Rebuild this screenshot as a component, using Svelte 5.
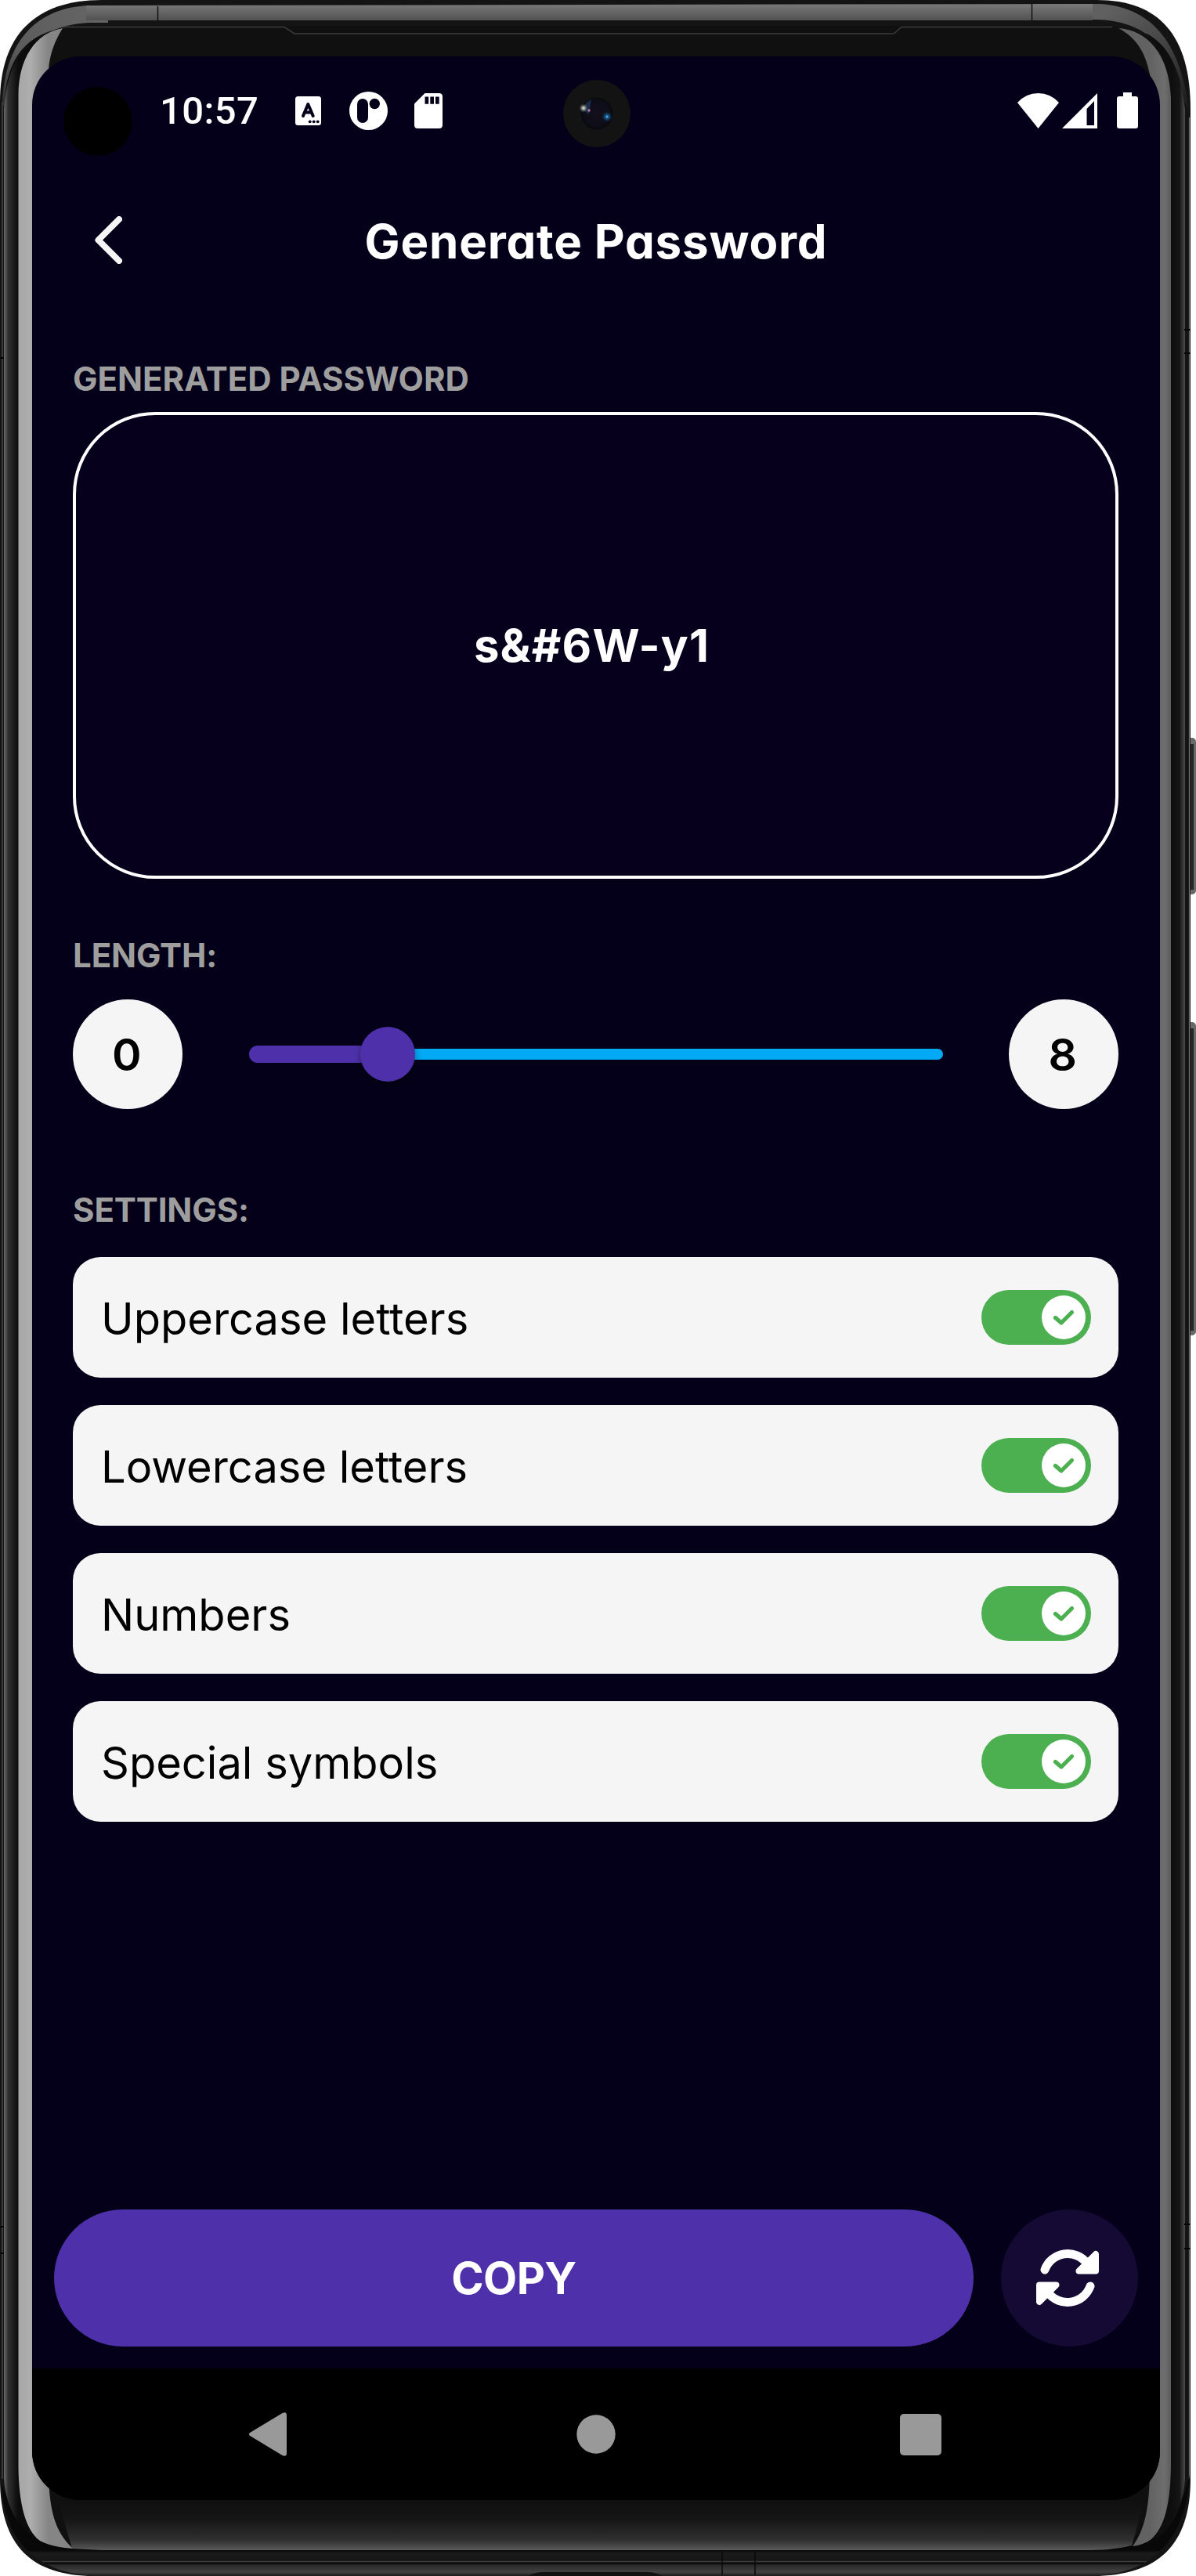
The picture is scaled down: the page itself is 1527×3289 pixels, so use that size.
<script>
  let length = $state(8);
  const password = 's&#6W-y1';
  let settings = $state([
    { label: 'Uppercase letters', on: true },
    { label: 'Lowercase letters', on: true },
    { label: 'Numbers', on: true },
    { label: 'Special symbols', on: true }
  ]);
  // the slider runs from 0 to 40 characters
  const percent = $derived((length / 40) * 100);
</script>

<div class="phone">
  <svg class="shell" viewBox="0 0 1527 3289" aria-hidden="true">
    <defs>
      <linearGradient id="topBand" x1="0" y1="6" x2="0" y2="27" gradientUnits="userSpaceOnUse">
        <stop offset="0" stop-color="#777" /><stop offset="1" stop-color="#505050" />
      </linearGradient>
      <linearGradient id="corner" x1="0" y1="130" x2="110" y2="10" gradientUnits="userSpaceOnUse">
        <stop offset="0" stop-color="#333" /><stop offset=".4" stop-color="#5c5c5c" /><stop offset="1" stop-color="#646464" />
      </linearGradient>
      <linearGradient id="cornerR" x1="1519" y1="130" x2="1420" y2="10" gradientUnits="userSpaceOnUse">
        <stop offset="0" stop-color="#1c1c1c" /><stop offset=".5" stop-color="#444" /><stop offset="1" stop-color="#606060" />
      </linearGradient>
      <linearGradient id="leftEdge" x1="5" y1="0" x2="23" y2="0" gradientUnits="userSpaceOnUse">
        <stop offset="0" stop-color="#6a6a6a" /><stop offset=".3" stop-color="#303030" /><stop offset="1" stop-color="#0c0c0c" />
      </linearGradient>
      <linearGradient id="rightEdge" x1="1495" y1="0" x2="1513" y2="0" gradientUnits="userSpaceOnUse">
        <stop offset="0" stop-color="#0e0e0e" /><stop offset=".6" stop-color="#141414" /><stop offset="1" stop-color="#4c4c4c" />
      </linearGradient>
      <linearGradient id="chin" x1="0" y1="3192" x2="0" y2="3256" gradientUnits="userSpaceOnUse">
        <stop offset="0" stop-color="#0f0f0f" /><stop offset=".4" stop-color="#161616" /><stop offset=".8" stop-color="#303030" /><stop offset="1" stop-color="#5a5a5a" />
      </linearGradient>
      <linearGradient id="base" x1="0" y1="3256" x2="0" y2="3289" gradientUnits="userSpaceOnUse">
        <stop offset="0" stop-color="#080808" /><stop offset=".12" stop-color="#1b1b1b" /><stop offset=".4" stop-color="#161616" />
        <stop offset=".44" stop-color="#3a3a3a" /><stop offset=".5" stop-color="#050505" /><stop offset=".58" stop-color="#2a2a2a" />
        <stop offset=".85" stop-color="#414141" /><stop offset="1" stop-color="#1a1a1a" />
      </linearGradient>
      <linearGradient id="glareL" x1="23" y1="0" x2="62" y2="0" gradientUnits="userSpaceOnUse">
        <stop offset="0" stop-color="#a6a6a6" /><stop offset=".4" stop-color="#aeaeae" /><stop offset="1" stop-color="#858585" />
      </linearGradient>
      <linearGradient id="glareR" x1="1468" y1="0" x2="1495" y2="0" gradientUnits="userSpaceOnUse">
        <stop offset="0" stop-color="#626262" /><stop offset=".7" stop-color="#6e6e6e" /><stop offset="1" stop-color="#5c5c5c" />
      </linearGradient>
    </defs>

    <!-- side buttons -->
    <rect x="1516" y="942" width="11" height="200" rx="5" fill="#6a6a6a" />
    <rect x="1516" y="950" width="8" height="186" fill="#262626" />
    <rect x="1516" y="1305" width="11" height="400" rx="5" fill="#6a6a6a" />
    <rect x="1516" y="1313" width="8" height="386" fill="#262626" />

    <!-- body -->
    <path d="M0 130C0 45 45 0 130 0H1400C1480 0 1520 45 1520 140V3165C1520 3250 1478 3289 1395 3289H120C40 3289 0 3250 0 3165Z" fill="#141414" />
    <path d="M1518.5 150V3165" stroke="#777" stroke-width="1.2" />
    <path d="M3 130V3165" stroke="#555" stroke-width="1.2" />
    <path d="M2 3170C6 3250 50 3284 120 3289H1395C1470 3286 1514 3245 1519 3160C1500 3235 1460 3256 1390 3256H130C60 3256 20 3225 2 3170Z" fill="url(#base)" />

    <!-- metal rim along the top -->
    <path d="M3 135C5 55 45 9 115 7H138V29H115C60 31 14 60 8 135Z" fill="url(#corner)" />
    <path d="M1318 5H1405C1475 10 1508 60 1518 140L1512 130C1500 60 1460 26 1400 25H1318Z" fill="url(#cornerR)" />
    <path d="M110 7L1395 5V26H110Z" fill="url(#topBand)" />
    <path d="M201.500 8V29M1317.500 4V26" stroke="#111" stroke-width="1.500" />

    <!-- glass -->
    <path d="M5 140C7 65 40 33 115 33H1400C1475 33 1505 70 1513 140V3165C1506 3225 1475 3256 1390 3256H130C50 3254 12 3225 5 3165Z" fill="#101010" />
    <path d="M5 140C8 95 22 65 52 46C34 66 24 90 23 120V3165C25 3200 34 3228 50 3244C20 3225 8 3200 5 3165Z" fill="url(#leftEdge)" />
    <path d="M1495 120C1494 85 1480 58 1462 42C1492 56 1508 90 1513 140V3165C1510 3205 1496 3228 1472 3245C1488 3225 1495 3195 1495 3165Z" fill="url(#rightEdge)" />
    <path d="M62 3150H1468V3170L1445 3250C1425 3255 1405 3256 1385 3256H130L92 3254Z" fill="url(#chin)" />
    <path d="M80 36C45 42 24 75 23.500 120V3150C24 3195 32 3230 51 3244C65 3251 80 3253 93 3254C70 3232 62 3205 62 3150V90C63 70 70 52 80 36Z" fill="url(#glareL)" />
    <path d="M1428 36C1465 38 1493 70 1495 125V3150C1494 3195 1488 3225 1470 3242C1463 3247 1455 3250 1446 3251C1462 3230 1468 3200 1468 3150V95C1462 65 1450 48 1428 36Z" fill="url(#glareR)" />
    <path d="M80 34.500H363L376 43H1141L1151 34.500H1420" fill="none" stroke="#3c3c3c" stroke-width="1.500" />
    <path d="M0 457H5M0 2843H5M0 2877H5M1512 421H1520M1512 451H1520M1512 2840H1520M1512 2871H1520" stroke="#050505" stroke-width="2" />
    <path d="M922 3257V3288M964 3257V3288" stroke="#0a0a0a" stroke-width="1.500" />
    <path d="M675 3289Q682 3284 695 3284H825Q838 3284 845 3289Z" fill="#111" />
  </svg>

  <main class="screen">
    <div class="status">
      <span class="hole"></span>
      <span class="time">10:57</span>
      <svg class="i-a" viewBox="0 0 33 37">
        <rect width="33" height="37" rx="3.500" fill="#fff" />
        <path d="M10 25L16.300 10L22.700 25M12.500 20.500H20" fill="none" stroke="#05001a" stroke-width="4" stroke-linecap="round" stroke-linejoin="round" />
        <g fill="#05001a"><circle cx="18.700" cy="32.300" r="1.900" /><circle cx="23.700" cy="32.300" r="1.900" /><circle cx="28.700" cy="32.300" r="1.900" /></g>
      </svg>
      <svg class="i-p" viewBox="0 0 49 49">
        <circle cx="24.500" cy="24.500" r="24.500" fill="#fff" />
        <rect x="10" y="9" width="14" height="31" rx="7" fill="#05001a" />
        <circle cx="32.300" cy="15.500" r="6.700" fill="#05001a" />
      </svg>
      <svg class="i-sd" viewBox="0 0 36 45">
        <path d="M13.500 0H31.500Q36 0 36 4.500V40.500Q36 45 31.500 45H4.500Q0 45 0 40.500V13.500Z" fill="#fff" />
        <path d="M13.500 4.500h4.700v9.200h-4.700zM20.300 4.500h4.700v9.200h-4.700zM27 4.500h4.700v9.200h-4.700z" fill="#05001a" />
      </svg>
      <svg class="i-wifi" viewBox="0 0 53 45">
        <path d="M0 12Q11 0 26.500 0T53 12L26.500 45Z" fill="#fff" />
      </svg>
      <svg class="i-cell" viewBox="0 0 45 45">
        <path d="M45 0V45H0ZM41 10L31.500 20V41H41Z" fill="#fff" fill-rule="evenodd" />
      </svg>
      <svg class="i-bat" viewBox="0 0 27 46">
        <path d="M8 0H19V5H24Q27 5 27 8V43Q27 46 24 46H3Q0 46 0 43V8Q0 5 3 5H8Z" fill="#fff" />
      </svg>
      <svg class="camera" viewBox="0 0 86 86">
        <defs>
          <radialGradient id="lens" cx=".5" cy=".5" r=".5">
            <stop offset="0" stop-color="#140f1c" /><stop offset=".8" stop-color="#0d0d18" /><stop offset="1" stop-color="#080a0c" />
          </radialGradient>
          <radialGradient id="blueGlow"><stop offset="0" stop-color="#9fe0ff" /><stop offset=".2" stop-color="#1f6fa8" /><stop offset="1" stop-color="#0a3050" stop-opacity="0" /></radialGradient>
          <radialGradient id="whiteGlow"><stop offset="0" stop-color="#e6ece0" /><stop offset=".35" stop-color="#8d968c" /><stop offset="1" stop-color="#333" stop-opacity="0" /></radialGradient>
        </defs>
        <circle cx="43" cy="43" r="43" fill="#121312" />
        <circle cx="43" cy="43" r="20.500" fill="url(#lens)" />
        <path d="M25 38Q28 28 36 25L33 44Z" fill="#25406e" opacity=".6" />
        <circle cx="26" cy="36" r="6" fill="url(#whiteGlow)" />
        <circle cx="33" cy="39" r="1.700" fill="#b57aa8" />
        <circle cx="56" cy="47" r="7" fill="url(#blueGlow)" />
      </svg>
    </div>

    <header>
      <svg class="back" viewBox="0 0 35 61">
        <path d="M31 4L4.500 30.500L31 57" fill="none" stroke="#f5f5f5" stroke-width="8" stroke-linecap="round" stroke-linejoin="round" />
      </svg>
      <h1>Generate Password</h1>
    </header>

    <div class="content">
      <h2 class="first">GENERATED PASSWORD</h2>
      <div class="box"><span>{password}</span></div>

      <h2 class="len">LENGTH:</h2>
      <div class="slider">
        <div class="bubble">0</div>
        <div class="track">
          <div class="fill" style:width="{percent}%"></div>
          <div class="thumb"></div>
          <div class="rest"></div>
        </div>
        <div class="bubble">{length}</div>
      </div>

      <h2 class="set">SETTINGS:</h2>
      <div class="cards">
        {#each settings as s}
          <div class="card">
            <span>{s.label}</span>
            <button class="switch" class:on={s.on} aria-label={s.label} onclick={() => (s.on = !s.on)}>
              <svg viewBox="0 0 56 56">
                <circle cx="28" cy="28" r="28" fill="#fff" />
                <path d="M17.500 28.500L25 35L38.500 21.500" fill="none" stroke="#4caf50" stroke-width="5.200" stroke-linecap="round" stroke-linejoin="round" />
              </svg>
            </button>
          </div>
        {/each}
      </div>
    </div>

    <div class="actions">
      <button class="copy">COPY</button>
      <button class="refresh" aria-label="Regenerate">
        <svg viewBox="0 0 80 75">
          <g id="arrow">
            <path d="M11 27A31 31 0 0 1 65 19" fill="none" stroke="#fff" stroke-width="11" stroke-linecap="round" />
            <path d="M76 7V28.500H54.500Z" fill="#fff" stroke="#fff" stroke-width="8" stroke-linejoin="round" />
          </g>
          <use href="#arrow" transform="rotate(180 40 37.500)" />
        </svg>
      </button>
    </div>

    <nav>
      <svg class="n-back" viewBox="0 0 49 56"><path d="M3 25.500L43.500 1Q49-1.500 49 4V52Q49 57.500 43.500 55L3 30.500Q-1.500 28 3 25.500Z" fill="#999" /></svg>
      <svg class="n-home" viewBox="0 0 50 50"><circle cx="25" cy="25" r="24.700" fill="#999" /></svg>
      <svg class="n-recent" viewBox="0 0 53 53"><rect width="53" height="53" rx="5" fill="#999" /></svg>
    </nav>
  </main>
</div>

<style>
  :global(body) { margin: 0; background: #fff; }
  .phone {
    position: relative;
    box-sizing: border-box;
    width: 1527px;
    height: 3289px;
    padding: 72px 46px 97px 41px;
    overflow: hidden;
    font-family: Inter, sans-serif;
  }
  .shell { position: absolute; inset: 0; width: 100%; height: 100%; }
  .screen {
    position: relative;
    display: flex;
    flex-direction: column;
    height: 3120px;
    border-radius: 62px;
    overflow: hidden;
    background: #05001a;
  }
  svg { display: block; flex: none; }
  button { border: 0; padding: 0; font: inherit; }

  .status {
    position: relative;
    display: flex;
    align-items: center;
    height: 138px;
    padding: 0 28px 0 163px;
    box-sizing: border-box;
  }
  .hole { position: absolute; left: 40px; top: 39px; width: 88px; height: 88px; border-radius: 50%; background: #000; }
  .time { width: 173px; padding-top: 2px; color: #fff; font: 500 49px/60px Roboto, sans-serif; letter-spacing: .4px; white-space: nowrap; }
  .i-a { width: 33px; height: 37px; }
  .i-p { width: 49px; height: 49px; margin-left: 36px; }
  .i-sd { width: 36px; height: 45px; margin-left: 34px; }
  .i-wifi { width: 53px; height: 45px; margin-left: auto; }
  .i-cell { width: 45px; height: 45px; margin-left: 4px; }
  .i-bat { width: 27px; height: 46px; margin-left: 25px; }
  .camera { position: absolute; left: 678px; top: 30px; width: 86px; height: 86px; }

  header {
    display: grid;
    grid-template-columns: 115px 1fr 115px;
    align-items: center;
    height: 196px;
  }
  .back { width: 35px; height: 61px; margin: 0 0 3px 80px; }
  h1 {
    margin: 0;
    text-align: center;
    color: #fff;
    font-size: 60px;
    font-weight: 650;
    line-height: 80px;
    letter-spacing: .8px;
    font-feature-settings: 'cv11';
    white-space: nowrap;
  }

  .content { flex: 1; padding: 0 53px 0 52px; }
  h2 {
    margin: 0;
    color: #9e9e9e;
    font-size: 42px;
    font-weight: 700;
    line-height: 50px;
    letter-spacing: -.1px;
    white-space: nowrap;
  }
  .first { padding: 53px 0 17px; letter-spacing: 0; }
  .box {
    display: flex;
    align-items: center;
    justify-content: center;
    box-sizing: border-box;
    height: 596px;
    padding-right: 10px;
    border: 4px solid #fff;
    border-radius: 105px;
    background: #07001d;
    color: #fff;
    font-size: 58px;
    font-weight: 680;
    letter-spacing: 1.2px;
    font-feature-settings: 'cv11';
  }
  .len { padding: 73px 0 31px; }
  .slider { display: flex; align-items: center; height: 140px; }
  .bubble {
    display: flex;
    align-items: center;
    justify-content: center;
    box-sizing: border-box;
    width: 140px;
    height: 140px;
    padding-right: 3px;
    border-radius: 50%;
    background: #f5f5f5;
    color: #000;
    font-size: 57px;
    font-weight: 640;
    letter-spacing: -.5px;
  }
  .track { flex: 1; display: flex; align-items: center; margin: 0 84px 0 85px; }
  .fill { box-sizing: border-box; height: 22px; margin-right: -35px; border-radius: 11px; background: #4e31aa; }
  .thumb { z-index: 1; width: 70px; height: 70px; border-radius: 50%; background: #4e31aa; box-shadow: 0 4px 8px #0006; }
  .rest { flex: 1; height: 14px; margin-left: -35px; border-radius: 7px; background: #03a9f4; }
  .set { padding: 104px 0 35px; }
  .cards { display: flex; flex-direction: column; gap: 35px; }
  .card {
    display: flex;
    align-items: center;
    justify-content: space-between;
    box-sizing: border-box;
    height: 154px;
    padding: 0 35px 0 36px;
    border-radius: 35px;
    background: #f5f5f5;
    color: #000;
    font-size: 56px;
  }
  .card span { padding-top: 4px; }
  .switch {
    display: flex;
    align-items: center;
    box-sizing: border-box;
    width: 140px;
    height: 70px;
    padding: 0 7px;
    border-radius: 35px;
    background: #9e9e9e;
  }
  .switch.on { justify-content: flex-end; background: #4caf50; }
  .switch svg { width: 56px; height: 56px; }

  .actions { display: flex; gap: 35px; padding: 0 28px 28px; }
  .copy {
    flex: 1;
    height: 175px;
    padding-top: 1px;
    border-radius: 88px;
    background: #4e31aa;
    color: #fff;
    font-size: 56px;
    font-weight: 750;
    letter-spacing: -.6px;
  }
  .refresh {
    display: flex;
    align-items: center;
    justify-content: center;
    width: 175px;
    height: 175px;
    border-radius: 50%;
    background: #150a33;
  }
  .refresh svg { width: 80px; height: 75px; margin-right: 5px; }

  nav {
    display: flex;
    align-items: center;
    justify-content: space-between;
    box-sizing: border-box;
    height: 168px;
    padding: 0 279px 0 276px;
    background: #000;
  }
  .n-back { width: 49px; height: 56px; }
  .n-home { width: 50px; height: 50px; margin-left: 6px; }
  .n-recent { width: 53px; height: 53px; }
</style>
